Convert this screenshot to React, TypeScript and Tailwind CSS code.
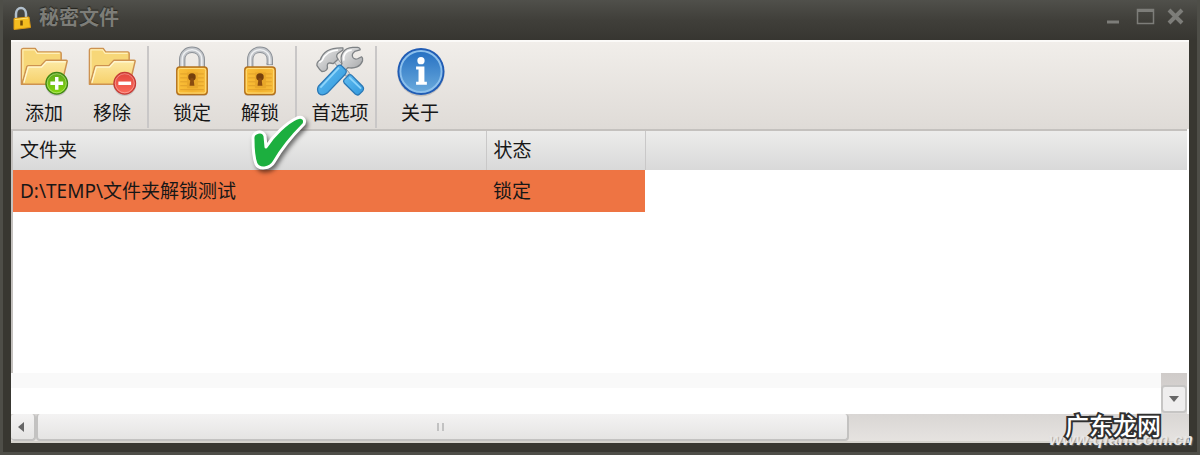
import { useState, type ReactNode } from 'react';

function FolderIcon({ kind }: { kind: 'add' | 'remove' }) {
  const add = kind === 'add';
  return (
    <svg viewBox="0 0 52 52" className="size-[52px]" aria-hidden="true">
      <defs>
        <linearGradient id={`fold-${kind}`} x1="0" y1="0" x2="0" y2="1">
          <stop offset="0" stopColor="#fdeaa6" />
          <stop offset="1" stopColor="#f6d06a" />
        </linearGradient>
        <linearGradient id={`badge-${kind}`} x1="0" y1="0" x2="0" y2="1">
          <stop offset="0" stopColor={add ? '#5fa81c' : '#e2463c'} />
          <stop offset="1" stopColor={add ? '#84d80c' : '#fb6a5c'} />
        </linearGradient>
      </defs>
      <path d="M3 39 V4.500 Q3 2.500 5 2.500 H17 L19.500 6 H42 Q43.500 6 43.500 8 V20 L40 39 Z" fill="#f7d778" stroke="#cd9250" strokeWidth="1.500" strokeLinejoin="round" />
      <path d="M4.500 34 V4 H16.500 L19 7.500 H42" fill="none" stroke="#fff0b8" strokeWidth="1.200" />
      <path d="M3.500 39 L8.500 21 Q9 20 10.500 20 H23 L28 14.500 H48.500 Q50 14.500 49.500 16 L44 39 Z" fill={`url(#fold-${kind})`} stroke="#cd9250" strokeWidth="1.500" strokeLinejoin="round" />
      <path d="M5.500 37.500 L10 21.500 H23.500 L28.500 16 H48" fill="none" stroke="#fff6cf" strokeWidth="1.400" />
      <circle cx="39" cy="39.500" r="11.500" fill="#00000022" />
      <circle cx="39" cy="38" r="11" fill={`url(#badge-${kind})`} stroke={add ? '#3f8514' : '#c53b36'} strokeWidth="1.300" />
      <circle cx="39" cy="38" r="9.700" fill="none" stroke="#ffffff55" />
      <path d={add ? 'M32.500 38 H45.500 M39 31.500 V44.500' : 'M32.500 38 H45.500'} stroke="#fff" strokeWidth="3.500" />
    </svg>
  );
}

function LockIcon({ open = false }: { open?: boolean }) {
  const id = open ? 'lock-open' : 'lock-closed';
  const shackle = open
    ? 'M16 23 V14 C16 0.500 36 0.500 36 14 V18.500'
    : 'M16 23 V14 C16 0.500 36 0.500 36 14 V23';
  return (
    <svg viewBox="0 0 52 52" className="size-[52px]" aria-hidden="true">
      <defs>
        <linearGradient id={id} x1="0" y1="0" x2="1" y2="0">
          <stop offset="0" stopColor="#fbbf38" />
          <stop offset="0.500" stopColor="#f3b32e" />
          <stop offset="1" stopColor="#f8bd3c" />
        </linearGradient>
      </defs>
      <path d={shackle} fill="none" stroke="#8b9096" strokeWidth="6.500" />
      {open && <path d="M32.750 18.500 H39.250" stroke="#8b9096" strokeWidth="2" />}
      <path d={shackle} fill="none" stroke="#c3c6ca" strokeWidth="4.500" />
      <path d={shackle} fill="none" stroke="#eef0f2" strokeWidth="1.500" />
      <rect x="10.500" y="23" width="31" height="28" rx="3" fill="#00000022" />
      <rect x="10.500" y="21.500" width="31" height="28" rx="3" fill={`url(#${id})`} stroke="#b3711e" strokeWidth="1.500" />
      <rect x="12" y="23" width="28" height="25" rx="2" fill="none" stroke="#ffdf80" />
      <path d="M14 28.500 H38 M14 32.500 H38 M14 36.500 H38 M14 40.500 H38 M14 44.500 H38" stroke="#e0a02b" />
      <rect x="21" y="27" width="11" height="16" fill="#e8a72a" />
      <circle cx="26" cy="31.500" r="3.800" fill="#75400c" />
      <path d="M24.500 33 H27.500 L28.500 40.500 H23.500 Z" fill="#8a4c10" />
    </svg>
  );
}

function ToolsIcon() {
  return (
    <svg viewBox="0 0 52 52" className="size-[52px]" aria-hidden="true">
      <defs>
        <linearGradient id="steel" x1="0" y1="0" x2="1" y2="1">
          <stop offset="0" stopColor="#eeeeee" />
          <stop offset="1" stopColor="#a0a2a4" />
        </linearGradient>
        <linearGradient id="handle" x1="0" y1="0" x2="1" y2="1">
          <stop offset="0" stopColor="#62bdf1" />
          <stop offset="1" stopColor="#2f97dc" />
        </linearGradient>
      </defs>
      <path d="M17 13 L21 10 L36 28 L32 31 Z" fill="#d9dadb" stroke="#8f9295" />
      <path d="M30 34.500 L35 29.500 Q36.500 28.500 38 30 L49 41 Q51 43.500 49 46 L46 49 Q44 51 41.500 49 L30.500 38 Q29 36 30 34.500 Z" fill="url(#handle)" stroke="#2b78b5" strokeWidth="1.300" />
      <path d="M35.500 32 L47.500 43.500" stroke="#8ed5fb" strokeWidth="1.800" />
      <path d="M28 18 C25 9 30 2 39 1.500 H44 Q47 2 46.500 4 L41 5.500 Q37.500 8 39 11.500 Q40.500 14 44 13 L48 11 Q49.500 12 49 15 C47 21 41 23.500 34 22 L29.500 27 L25 23 Z" fill="url(#steel)" stroke="#7e8285" strokeWidth="1.300" strokeLinejoin="round" />
      <path d="M30 15 C29 9 32 4.500 38 4" fill="none" stroke="#fff" strokeWidth="1.500" />
      <path d="M2.500 20 Q2 16 6 14 C9 5 17 1.500 29 2 L29 4 L23.500 8 Q21.500 10 24 13.500 L19 18 Q13 16 13 20 Q14 24 10.500 25.500 L7.500 26 Q5 24 2.500 20 Z" fill="url(#steel)" stroke="#7e8285" strokeWidth="1.300" strokeLinejoin="round" />
      <path d="M5 17 L8 14.500 C11 7 16 4.500 24 4" fill="none" stroke="#fff" strokeWidth="1.500" />
      <path d="M23.500 20.500 Q26 18.500 28 20.500 L32 24.500 Q33 26.500 31.500 28.500 L13 48 Q8 51.500 4.500 48.500 Q2 45 4 41 Z" fill="url(#handle)" stroke="#2b78b5" strokeWidth="1.300" strokeLinejoin="round" />
      <path d="M25 22 L6 42.500" stroke="#8ed5fb" strokeWidth="1.800" />
    </svg>
  );
}

function InfoIcon() {
  return (
    <svg viewBox="0 0 52 52" className="size-[52px]" aria-hidden="true">
      <defs>
        <linearGradient id="info" x1="0" y1="0" x2="0" y2="1">
          <stop offset="0" stopColor="#2570c2" />
          <stop offset="1" stopColor="#69a9dc" />
        </linearGradient>
      </defs>
      <circle cx="27" cy="27.500" r="24" fill="#00000025" />
      <circle cx="27" cy="26" r="24" fill="#205cb4" />
      <circle cx="27" cy="26" r="21" fill="url(#info)" stroke="#8cc0ec" strokeWidth="2" />
      <circle cx="27" cy="15" r="3.700" fill="#fff" />
      <path d="M22 21 H30.500 V36.500 H33 V39.500 H22 V36.500 H24.500 V24 H22 Z" fill="#fff" />
    </svg>
  );
}

function ToolButton({ label, children, onClick }: { label: string; children: ReactNode; onClick?: () => void }) {
  return (
    <button type="button" onClick={onClick} className="flex w-[66px] flex-col items-center whitespace-nowrap">
      {children}
      <span className="text-[19px] leading-8">{label}</span>
    </button>
  );
}

function Separator() {
  return <div className="mr-2 mb-px w-[2px] self-stretch bg-[#c9c7c7]" />;
}

export default function App() {
  const [locked, setLocked] = useState(true);
  return (
    <main className="relative flex min-h-screen flex-col border-x-[3px] border-b-[3px] border-[#4e4e48] bg-[#383731] px-2 pb-[9px] font-['Noto_Sans','Noto_Sans_CJK_SC',sans-serif] text-[19px] text-[#171717]">
      <header className="-mx-2 flex h-10 items-center justify-between bg-linear-to-b from-[#50504b] via-[#403f3a] to-[#373631] pr-2 pl-2">
        <div className="flex items-center gap-2 pb-1">
          <svg viewBox="0 0 20 24" className="h-6 w-5" aria-hidden="true">
            <path d="M5 12 V8 C5 0 15 0 15 8 V12" fill="none" stroke="#b2c0cd" strokeWidth="2.500" />
            <path d="M3 12.500 L18 11 L19.500 21.500 L3 23.500 Z" fill="#f4bd20" stroke="#dc9914" />
            <path d="M4 13.500 L17 12" stroke="#ffe474" />
            <path d="M10.500 14.500 V19.500" stroke="#704a08" strokeWidth="2.500" />
          </svg>
          <h1 className="text-[20px] leading-7 font-bold text-[#7d7d78] [text-shadow:0_-1px_1px_#24241f]">秘密文件</h1>
        </div>
        <div className="flex items-center gap-2 pb-2 text-[#7d7d79]">
          <button type="button" aria-label="最小化" className="size-6">
            <svg viewBox="0 0 24 24"><path d="M6 18 H18" stroke="currentColor" strokeWidth="3" /></svg>
          </button>
          <button type="button" aria-label="最大化" className="size-6">
            <svg viewBox="0 0 24 24"><path d="M4.500 5.500 H20.500 V19.500 H4.500 Z" fill="none" stroke="currentColor" strokeWidth="1.500" /><path d="M4 6.500 H21" stroke="currentColor" strokeWidth="3" /></svg>
          </button>
          <button type="button" aria-label="关闭" className="size-6">
            <svg viewBox="0 0 24 24"><path d="M4 6 L17 19 M17 6 L4 19" stroke="currentColor" strokeWidth="4" /></svg>
          </button>
        </div>
      </header>

      <div className="flex grow flex-col border-b-2 border-[#d5d3cd] bg-white">
        <nav className="flex h-[89px] gap-[2px] border-t-2 border-[#fbfaf8] bg-linear-to-b from-[#f1eeea] to-[#dfdbd7] pt-1">
          <ToolButton label="添加"><FolderIcon kind="add" /></ToolButton>
          <ToolButton label="移除"><FolderIcon kind="remove" /></ToolButton>
          <Separator />
          <ToolButton label="锁定" onClick={() => setLocked(true)}><LockIcon /></ToolButton>
          <ToolButton label="解锁" onClick={() => setLocked(false)}><LockIcon open /></ToolButton>
          <Separator />
          <ToolButton label="首选项"><ToolsIcon /></ToolButton>
          <Separator />
          <ToolButton label="关于"><InfoIcon /></ToolButton>
        </nav>

        <section className="mr-[2px] grow border-t-2 border-l-2 border-[#c4c1be]">
          <table className="w-full table-fixed border-collapse text-left">
            <colgroup>
              <col className="w-[473px]" />
              <col className="w-[159px]" />
              <col />
            </colgroup>
            <thead className="bg-linear-to-b from-[#ececeb] to-[#d9d9d9]">
              <tr className="h-[39px]">
                <th className="border-r border-[#c9c8c8] px-[7px] font-normal">文件夹</th>
                <th className="border-r border-[#c9c8c8] px-[7px] font-normal">状态</th>
                <td />
              </tr>
            </thead>
            <tbody>
              <tr className="h-[42px]">
                <td className="bg-[#ee7443] px-[7px]">D:\TEMP\文件夹解锁测试</td>
                <td className="bg-[#ee7443] px-[7px]">{locked ? '锁定' : '解锁'}</td>
                <td />
              </tr>
            </tbody>
          </table>
        </section>

        <div className="flex h-[41px] justify-between">
          <div className="h-[15px] grow bg-[#f9f9f9]" />
          <div className="mr-[2px] w-[26px] bg-linear-to-b from-[#cfcbc9] to-[#dedbd9] pt-3">
            <button type="button" aria-label="向下滚动" className="flex h-[28px] w-full items-center justify-center rounded-[4px] border-2 border-[#c6c5c4] bg-[#efeeee]">
              <svg viewBox="0 0 10 6" className="h-[6px] w-[10px]"><path d="M0 0 H10 L5 6 Z" fill="#666" /></svg>
            </button>
          </div>
        </div>
        <div className="flex h-[27px] bg-linear-to-b from-[#d9d6d4] to-[#e6e3e0]">
          <button type="button" aria-label="向左滚动" className="flex w-[25px] items-center justify-center rounded-[4px] border-r-2 border-b-2 border-[#c3c2c1] bg-linear-to-b from-[#f4f3f3] to-[#e5e4e3] pr-1">
            <svg viewBox="0 0 6 10" className="h-[10px] w-[6px]"><path d="M6 0 V10 L0 5 Z" fill="#666" /></svg>
          </button>
          <div className="flex w-[69%] items-center justify-center gap-[3px] rounded-[4px] border-x-2 border-b-2 border-[#c3c2c1] bg-linear-to-b from-[#f4f3f3] to-[#e5e4e3] pr-1">
            <span className="h-2 w-[2px] bg-[#c2c2c2]" />
            <span className="h-2 w-[2px] bg-[#c2c2c2]" />
          </div>
        </div>
      </div>

      <svg viewBox="0 0 64 64" className="pointer-events-none absolute top-[111px] left-[242px] size-16 drop-shadow-[2px_3px_2px_#00000088]" aria-hidden="true">
        <path d="M8 28 C7 21 18 18 20 25 L21 36 C28 25 41 12 52 7 C57 5 61 8 59 13 C48 24 37 37 29 51 C25 58 14 59 11 53 C8 45 8 37 8 28 Z" fill="#1caf3f" stroke="#fff" strokeWidth="3" strokeLinejoin="round" />
      </svg>

      <div className="pointer-events-none absolute right-0 bottom-0 h-10 w-36">
        <span className="absolute right-1 bottom-0 text-[17px] leading-6 font-bold text-[#e7e6e5] italic font-['Liberation_Sans',sans-serif] [text-shadow:1px_1px_1px_#77777799]">www.qfan.com.cn</span>
        <span className="absolute right-9 bottom-[10px] text-[24px] leading-8 font-medium whitespace-nowrap text-white [-webkit-text-stroke:4px_#303030] [paint-order:stroke]">广东龙网</span>
      </div>
    </main>
  );
}
